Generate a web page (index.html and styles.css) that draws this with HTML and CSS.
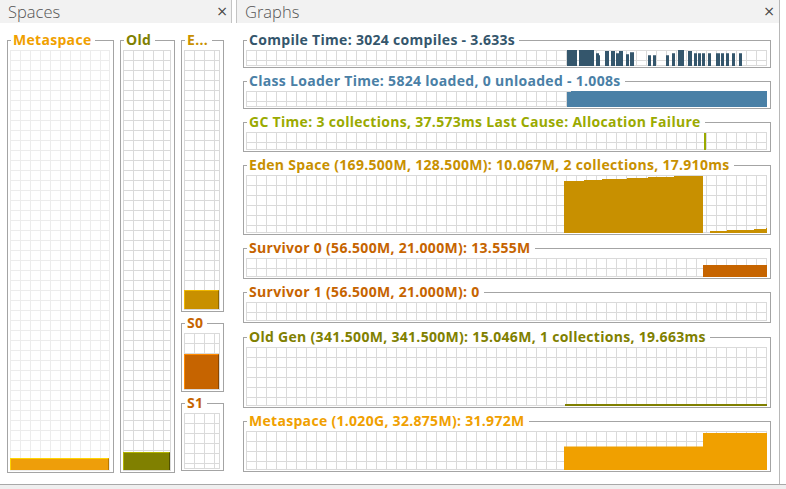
FILE: index.html
```html
<!DOCTYPE html>
<html lang="en">
<head>
<meta charset="utf-8">
<title>Spaces / Graphs</title>
<link rel="stylesheet" href="styles.css">
</head>
<body>
<div class="app">
  <div class="panels">
    <section class="panel spaces">
      <header class="panel-head"><span class="panel-title">Spaces</span><span class="close">×</span></header>
      <div class="spaces-body">
        <fieldset class="box col-meta c-meta">
          <legend>Metaspace</legend>
          <div class="plot plot-light h-meta"><div class="bar bar-meta" style="height:12px"></div></div>
        </fieldset>
        <fieldset class="box col-old c-old">
          <legend>Old</legend>
          <div class="plot h-meta"><div class="bar bar-old" style="height:18px"></div></div>
        </fieldset>
        <div class="col-young">
          <fieldset class="box c-eden">
            <legend>E...</legend>
            <div class="plot h-eden"><div class="bar bar-eden" style="height:19px"></div></div>
          </fieldset>
          <fieldset class="box c-surv">
            <legend>S0</legend>
            <div class="plot h-s0"><div class="bar bar-s0" style="height:35px"></div></div>
          </fieldset>
          <fieldset class="box c-surv">
            <legend>S1</legend>
            <div class="plot h-s1"></div>
          </fieldset>
        </div>
      </div>
    </section>
    <section class="panel graphs">
      <header class="panel-head"><span class="panel-title">Graphs</span><span class="close">×</span></header>
      <div class="graphs-body">
        <fieldset class="box c-compile">
          <legend>Compile Time: 3024 compiles - 3.633s</legend>
          <div class="plot g1">
            <svg class="chart" viewBox="0 0 521 15" preserveAspectRatio="none">
              <path fill="#34566c" d="M321 0h10v15h-10z M333 0h15v15h-15z M350 3h3v12h-3z M352 5h2v10h-2z M359 1h4v14h-4z M365 1h4v14h-4z M370 3h3v12h-3z M373 1h4v14h-4z M380 4h3v11h-3z M384 2h4v13h-4z M402 5h3v10h-3z M407 5h3v10h-3z M420 5h3v10h-3z M426 3h3v12h-3z M432 0h6v15h-6z M442 1h4v14h-4z M448 3h3v12h-3z M452 3h3v12h-3z M456 3h3v12h-3z M462 3h3v12h-3z M470 3h4v12h-4z M475 3h3v12h-3z M480 3h3v12h-3z M486 3h3v12h-3z M493 3h3v12h-3z"/>
            </svg>
          </div>
        </fieldset>
        <fieldset class="box c-loader">
          <legend>Class Loader Time: 5824 loaded, 0 unloaded - 1.008s</legend>
          <div class="plot g2">
            <svg class="chart" viewBox="0 0 521 15" preserveAspectRatio="none">
              <path fill="#4a80a6" d="M321 1h4v-1h196v15h-200z"/>
            </svg>
          </div>
        </fieldset>
        <fieldset class="box c-gc">
          <legend>GC Time: 3 collections, 37.573ms Last Cause: Allocation Failure</legend>
          <div class="plot g3">
            <svg class="chart" viewBox="0 0 521 17" preserveAspectRatio="none">
              <path fill="#9aaa00" d="M458 1h2v16h-2z"/>
            </svg>
          </div>
        </fieldset>
        <fieldset class="box c-eden">
          <legend>Eden Space (169.500M, 128.500M): 10.067M, 2 collections, 17.910ms</legend>
          <div class="plot g4">
            <svg class="chart" viewBox="0 0 521 57" preserveAspectRatio="none">
              <path fill="#c89000" d="M318 57V6h20V5h18V4h25V3h21V2h26V1h29v56z M464 57v-2h17v-1h27v-1h12v-1h1v5z"/>
            </svg>
          </div>
        </fieldset>
        <fieldset class="box c-surv">
          <legend>Survivor 0 (56.500M, 21.000M): 13.555M</legend>
          <div class="plot g5">
            <svg class="chart" viewBox="0 0 521 19" preserveAspectRatio="none">
              <path fill="#c66400" d="M457 7h64v12h-64z"/>
            </svg>
          </div>
        </fieldset>
        <fieldset class="box c-surv">
          <legend>Survivor 1 (56.500M, 21.000M): 0</legend>
          <div class="plot g6"></div>
        </fieldset>
        <fieldset class="box c-old box-oldgen">
          <legend>Old Gen (341.500M, 341.500M): 15.046M, 1 collections, 19.663ms</legend>
          <div class="plot g7">
            <svg class="chart" viewBox="0 0 521 58" preserveAspectRatio="none">
              <path fill="#808000" d="M319 56h202v2h-202z"/>
            </svg>
          </div>
        </fieldset>
        <fieldset class="box c-meta">
          <legend>Metaspace (1.020G, 32.875M): 31.972M</legend>
          <div class="plot g8">
            <svg class="chart" viewBox="0 0 521 38" preserveAspectRatio="none">
              <path fill="#f0a000" d="M318 38V15h139V2h64v36z"/>
            </svg>
          </div>
        </fieldset>
      </div>
    </section>
  </div>
  <footer class="statusbar"></footer>
</div>
</body>
</html>
```

FILE: styles.css
```css
* { box-sizing: border-box; }

html, body {
  margin: 0;
  padding: 0;
  background: #ffffff;
}

body {
  width: 786px;
  height: 489px;
  overflow: hidden;
  font-family: "Open Sans", "DejaVu Sans", sans-serif;
}

.app {
  display: flex;
  flex-direction: column;
  height: 489px;
}

.panels {
  flex: 1;
  display: flex;
  gap: 4px;
  padding-right: 6px;
}

.panel {
  display: flex;
  flex-direction: column;
}

.spaces {
  width: 232px;
}

.graphs {
  flex: 1;
  border-right: 1px solid #b8b8b8;
}

.panel-head {
  height: 23px;
  background: #f2f2f2;
  display: flex;
  align-items: center;
  justify-content: space-between;
  padding: 0 3px 0 8px;
}

.spaces .panel-head {
  border-right: 1px solid #c4c4c4;
}

.graphs .panel-head {
  border-left: 1px solid #c4c4c4;
  padding-left: 8px;
  padding-right: 4px;
}

.panel-title {
  font-size: 16.5px;
  font-weight: 300;
  color: #555555;
  line-height: 23px;
}

.close {
  font-family: "DejaVu Sans", sans-serif;
  font-size: 14px;
  color: #444444;
  line-height: 23px;
}

/* titled boxes */
.box {
  margin: 0;
  min-width: 0;
  border: 1px solid #a4a4a4;
  padding: 3px 3px 1px 2px;
}

.box legend {
  margin-left: 1px;
  padding: 0 4px 0 2px;
  font-size: 14px;
  line-height: 14px;
  font-weight: bold;
  letter-spacing: 0.3px;
  white-space: nowrap;
}

.c-meta legend { color: #f0a000; }
.c-old legend { color: #808000; }
.c-eden legend { color: #c89000; }
.c-surv legend { color: #c66400; }
.c-compile legend { color: #34566c; }
.c-loader legend { color: #4a80a6; }
.c-gc legend { color: #9aaa00; }

/* plots with grid */
.plot {
  position: relative;
  display: flex;
  flex-direction: column;
  justify-content: flex-end;
  background-color: #fff;
  background-image:
    linear-gradient(to right, #dadada 1px, transparent 1px),
    linear-gradient(to bottom, #dadada 1px, transparent 1px);
  background-size: 10px 10px;
  border-right: 1px solid #dadada;
  border-bottom: 1px solid #dadada;
}

.plot-light {
  background-image:
    linear-gradient(to right, #ececec 1px, transparent 1px),
    linear-gradient(to bottom, #ececec 1px, transparent 1px);
  border-right-color: #ececec;
  border-bottom-color: #ececec;
}

.chart {
  display: block;
  width: 100%;
  height: 100%;
}

/* spaces layout */
.spaces-body {
  display: flex;
  gap: 6px;
  padding: 10px 0 0 7px;
}

.col-meta { width: 107px; }
.col-old { width: 55px; }

.col-young {
  width: 43px;
  display: flex;
  flex-direction: column;
  gap: 4px;
}

.h-meta { height: 421px; }
.h-eden { height: 260px; }
.h-s0 { height: 57px; }
.h-s1 { height: 56px; }

.bar {
  width: 100%;
  border-style: solid;
  border-width: 1px 1px 0 1px;
}

.bar-meta {
  background: #ee9e0a;
  border-color: #ffd400 #b87800 #ee9e0a #ffd400;
}

.bar-old {
  background: #808000;
  border-color: #b4b400 #505000 #808000 #b4b400;
}

.bar-eden {
  background: #c89000;
  border-color: #f0b800 #906800 #c89000 #f0b800;
}

.bar-s0 {
  background: #c66400;
  border-color: #ff8a00 #8a4600 #c66400 #ff8a00;
}

/* graphs layout */
.graphs-body {
  display: flex;
  flex-direction: column;
  gap: 6px;
  padding: 10px 8px 0 7px;
}

.graphs-body .plot {
  border-right: 0;
  border-bottom: 0;
  box-shadow: inset -1px -1px 0 #dadada;
}

.box-oldgen { margin-top: 1px; }

.g1 { height: 16px; }
.g2 { height: 16px; }
.g3 { height: 18px; }
.g4 { height: 58px; }
.g5 { height: 19px; }
.g6 { height: 19px; }
.g7 { height: 59px; }
.g8 { height: 39px; }

.statusbar {
  height: 5px;
  border-top: 1px solid #a8a8a8;
  background: #efefef;
}
```
